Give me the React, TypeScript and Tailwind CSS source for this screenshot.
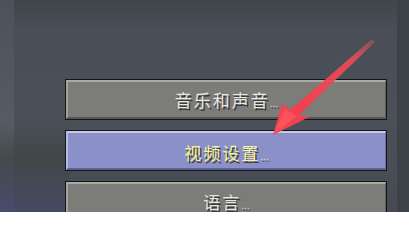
const items = [
  { label: "音乐和声音", active: false },
  { label: "视频设置", active: true },
  { label: "语言", active: false },
];

const MenuButton = ({ label, active }: { label: string; active: boolean }) => {
  return (
    <div className="w-[322px] h-[41px] shrink-0 border-[1.5px] border-[#151618] bg-[#151618]">
      <div
        className={
          active
            ? "h-full flex items-center justify-center bg-[#8c90c9] border-t-2 border-l-2 border-t-[#c4c7ee] border-l-[#b8bbe6] border-b-2 border-r border-b-[#5c6094] border-r-[#6a6ea2]"
            : "h-full flex items-center justify-center bg-[#7c7c79] border-t-2 border-l-2 border-t-[#a9a9a6] border-l-[#a3a3a0] border-b-2 border-r border-b-[#555553] border-r-[#5f5f5c]"
        }
      >
        <span
          className={
            active
              ? "text-[17px] leading-none tracking-[2px] text-[#f4f2a0] [text-shadow:1.5px_1.5px_0_#3e3f2c] translate-y-[2px]"
              : "text-[17px] leading-none tracking-[2px] text-[#e6e6e4] [text-shadow:1.5px_1.5px_0_#3b3b3a]"
          }
          style={{ fontFamily: '"Noto Sans CJK SC", "Noto Sans", sans-serif' }}
        >
          {label}
          <span className="text-[10px] tracking-[0px] opacity-80">...</span>
        </span>
      </div>
    </div>
  );
};

const Arrow = () => {
  return (
    <svg className="absolute left-0 top-0 pointer-events-none" width="409" height="212" viewBox="0 0 409 212">
      <defs>
        <linearGradient id="shaft" x1="372" y1="40" x2="290" y2="116" gradientUnits="userSpaceOnUse">
          <stop offset="0" stopColor="#e85a66" stopOpacity="0.35" />
          <stop offset="0.25" stopColor="#f04a58" stopOpacity="0.9" />
          <stop offset="1" stopColor="#f43c4c" />
        </linearGradient>
      </defs>
      <polygon points="372,39 375,42 298,116 289,111" fill="url(#shaft)" />
      <polygon points="273,135 282,104 291,110 299,115 309,117" fill="#f5404f" />
      <polygon points="273,135 285,109 297,116" fill="#ff6a72" opacity="0.45" />
    </svg>
  );
};

export default function App() {
  return (
    <div className="relative w-[409px] h-[212px] overflow-hidden bg-[linear-gradient(180deg,#40444b_0px,#4a4f57_30px,#4b5058_120px,#464a54_212px)]">
      <div className="absolute inset-y-0 left-0 w-[14px] bg-[linear-gradient(180deg,#4d525a,#575c64_60%,#4a4d68)]" />
      <div className="absolute left-0 bottom-0 w-[70px] h-[90px] bg-[linear-gradient(180deg,rgba(60,66,60,0)_0%,rgba(60,66,60,0.6)_40%,rgba(72,74,110,0.6)_100%)]" />
      <div className="absolute inset-y-0 right-0 w-[12px] bg-[#3d4148]" />
      <div className="relative flex flex-col gap-[10px] pt-[79px] pl-[65px]">
        {items.map((it) => (
          <MenuButton key={it.label} label={it.label} active={it.active} />
        ))}
      </div>
      <Arrow />
    </div>
  );
}
